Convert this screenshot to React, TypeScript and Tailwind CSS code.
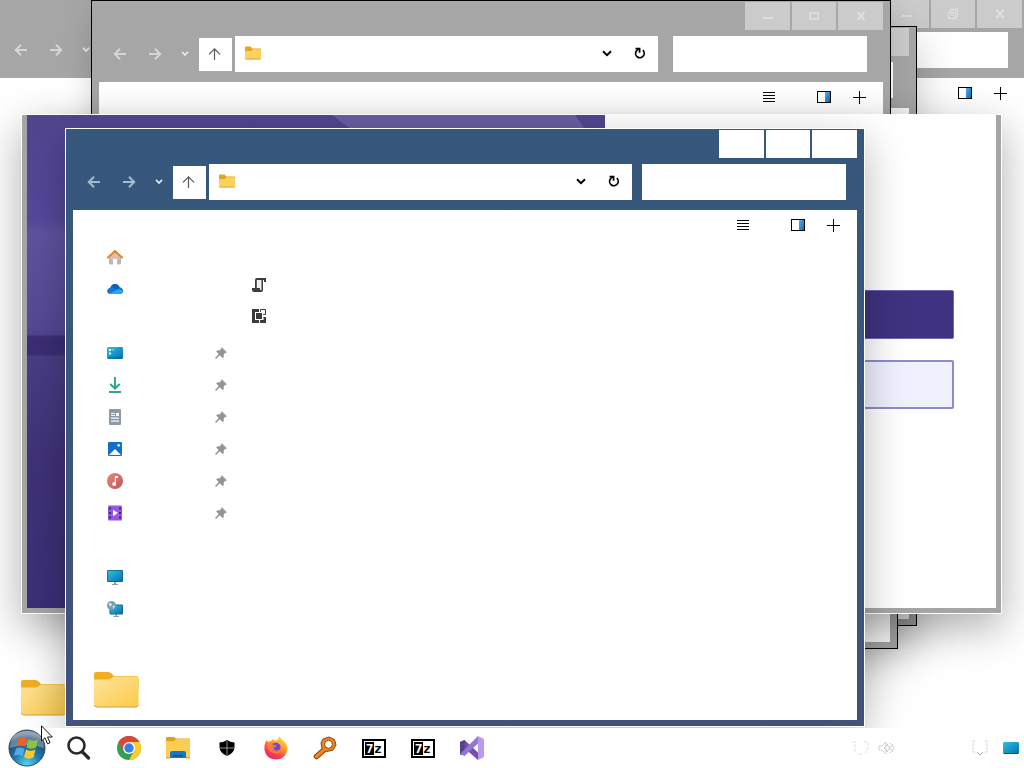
import React from "react";

type IconProps = { className?: string };

const ArrowLeft = ({ className }: IconProps) => (
  <svg width="14" height="14" viewBox="0 0 14 14" className={className} fill="none" stroke="currentColor" strokeWidth="2">
    <path d="M13 7H2M7 1.8L1.8 7L7 12.2" />
  </svg>
);

const ArrowRight = ({ className }: IconProps) => (
  <svg width="14" height="14" viewBox="0 0 14 14" className={className} fill="none" stroke="currentColor" strokeWidth="2">
    <path d="M1 7H12M7 1.8L12.2 7L7 12.2" />
  </svg>
);

const ArrowUp = () => (
  <svg width="15" height="15" viewBox="0 0 15 15" fill="none" stroke="#5a5a5a" strokeWidth="1.2">
    <path d="M6.500 13V1.800M1 7.300L6.500 1.800L12 7.300" />
  </svg>
);

const SmallChevron = ({ className }: IconProps) => (
  <svg width="8" height="6" viewBox="0 0 8 6" className={className} fill="none" stroke="currentColor" strokeWidth="1.7">
    <path d="M1 .8L4 4L7 .8" />
  </svg>
);

const Chevron = () => (
  <svg width="10" height="8" viewBox="0 0 10 8" fill="none" stroke="#000" strokeWidth="2">
    <path d="M1 1.300L5 5.200L9 1.300" />
  </svg>
);

const Refresh = () => (
  <svg width="12" height="14" viewBox="0 0 12 14" fill="none" stroke="#000" strokeWidth="1.7">
    <path d="M8.800 3.200A4.300 4.300 0 1 1 2.200 4.200Q3 2.600 5.300 2" />
    <path d="M1.500 1.700H5.600V5.800" />
  </svg>
);

const Lines = () => (
  <svg width="12" height="12" viewBox="0 0 12 12" shapeRendering="crispEdges" fill="#000">
    <path d="M0 1h12v1H0zM0 4h12v1H0zM0 7h12v1H0zM0 10h12v1H0z" />
  </svg>
);

const PaneIcon = () => (
  <svg width="14" height="12" viewBox="0 0 14 12">
    <defs>
      <linearGradient id="pane" x1="0" y1="0" x2="1" y2="1">
        <stop offset="0" stopColor="#4cb3ee" />
        <stop offset="1" stopColor="#0c6cb8" />
      </linearGradient>
    </defs>
    <rect x="0.5" y="0.5" width="13" height="11" fill="#fff" stroke="#000" />
    <rect x="8" y="1" width="5" height="10" fill="url(#pane)" />
  </svg>
);

const PlusIcon = () => (
  <svg width="13" height="13" viewBox="0 0 13 13" shapeRendering="crispEdges" fill="#000">
    <path d="M6 0h1v13H6zM0 6h13v1H0z" />
  </svg>
);

const SmallFolder = () => (
  <svg width="16" height="16" viewBox="0 0 16 16">
    <path d="M0 1.500Q0 .5 1 .5H5.500L7.500 2.500H15Q16 2.500 16 3.500V7H0Z" fill="#e3a51c" />
    <path d="M0 5H6L8 3.300H15Q16 3.300 16 4.300V12.500Q16 13.500 15 13.500H1Q0 13.500 0 12.500Z" fill="#fbd25f" />
    <path d="M0 12.600H16Q16 13.600 15 13.600H1Q0 13.600 0 12.600Z" fill="#dfa936" />
  </svg>
);

const LargeFolder = () => (
  <svg width="46" height="38" viewBox="0 0 46 38">
    <defs>
      <linearGradient id="folder" x1="0" y1="0" x2="1" y2="1">
        <stop offset="0" stopColor="#fee39a" />
        <stop offset="1" stopColor="#fbcb4a" />
      </linearGradient>
    </defs>
    <path d="M1 4Q1 2 3 2H15Q17 2 18.500 3.500L21 6H43Q45.500 6 45.500 9V20H1Z" fill="#f0af22" />
    <path d="M1 9.500H15Q17 9.500 18.300 8.400L19.500 7.300Q20.500 6.600 22 6.600H43Q45.500 6.600 45.500 9V34.500Q45.500 37 43 37H3.500Q1 37 1 34.500Z" fill="url(#folder)" />
    <path d="M1.300 35Q1.800 37 3.800 37H42.700Q44.800 37 45.200 35" fill="none" stroke="#cfa045" strokeWidth="1" />
  </svg>
);

const HomeIcon = () => (
  <svg width="16" height="16" viewBox="0 0 16 16">
    <path d="M2 7.500L8 2.500L14 7.500V14.500Q14 15.500 13 15.500H10V10H6V15.500H3Q2 15.500 2 14.500Z" fill="#b9b9bb" />
    <path d="M3 8L8 3L13 8V10.500H10V10H6V10.500H3Z" fill="#dcbfae" />
    <path d="M1 8.500L8 2L15 8.500" fill="none" stroke="#e0862f" strokeWidth="2" strokeLinecap="round" strokeLinejoin="round" />
  </svg>
);

const CloudIcon = () => (
  <svg width="16" height="16" viewBox="0 0 16 16">
    <path d="M3.600 13Q0 12.600 .1 9.700Q.5 7 3.200 6.400Q4.800 3 8 3Q11.400 3.200 12.800 6.300Q15.800 7 16 10Q15.700 13 13 13Z" fill="#0f78d4" />
    <path d="M4 5.500Q5.500 3 8 3Q11.400 3.200 12.600 6.300L8.500 8Z" fill="#0d5fb8" />
    <path d="M2.300 12.500L9 9.300Q12 8 14.500 9Q16 9.500 16 10.500Q15.500 13 13 13H4Q3 13 2.300 12.500Z" fill="#29a8ef" />
  </svg>
);

const DesktopIcon = () => (
  <svg width="16" height="16" viewBox="0 0 16 16">
    <defs>
      <linearGradient id="desk" x1="0" y1="0" x2="1" y2="1">
        <stop offset="0" stopColor="#2cc3dc" />
        <stop offset="1" stopColor="#086db4" />
      </linearGradient>
    </defs>
    <rect x="0" y="2" width="16" height="12" rx="1.300" fill="url(#desk)" />
    <path d="M2 4h2v2H2zM2 7.500h2v2H2z" fill="#d9fbff" />
    <path d="M5.500 4h1.500v1.500H5.500z" fill="#7fe0ee" />
    <path d="M1 12.300h14v1H1z" fill="#096593" />
  </svg>
);

const TrayScreenIcon = () => (
  <svg width="16" height="14" viewBox="0 0 16 14">
    <rect x="0" y="1" width="16" height="12" rx="1.300" fill="url(#desk)" />
    <path d="M1 12H15V13H1Z" fill="#0a5780" />
  </svg>
);

const DownloadIcon = () => (
  <svg width="16" height="16" viewBox="0 0 16 16" fill="none" strokeWidth="1.900">
    <path d="M8 0V11.500M3.300 7L8 11.700L12.700 7" stroke="#20a889" />
    <path d="M2 15H14" stroke="#39997f" />
  </svg>
);

const DocumentIcon = () => (
  <svg width="16" height="16" viewBox="0 0 16 16">
    <rect x="2" y="0" width="12" height="16" rx="1" fill="#8b9aa6" />
    <path d="M4 4h4v1H4zM9 4h3v3H9zM4 6h4v1H4zM4 8.500h8v1.200H4zM4 11.500h8v1.200H4z" fill="#f4f8fa" />
  </svg>
);

const PictureIcon = () => (
  <svg width="16" height="16" viewBox="0 0 16 16">
    <rect x="1" y="1" width="14" height="14" rx="1.200" fill="#0f70c5" />
    <path d="M2 14L7.200 8.700Q8 8 8.800 8.700L14 14Z" fill="#f2faff" />
    <circle cx="11.700" cy="4.300" r="1.400" fill="#d7f3ff" />
  </svg>
);

const MusicIcon = () => (
  <svg width="16" height="16" viewBox="0 0 16 16">
    <defs>
      <linearGradient id="music" x1="0" y1="0" x2="1" y2="1">
        <stop offset="0" stopColor="#e9896a" />
        <stop offset="1" stopColor="#bf5366" />
      </linearGradient>
    </defs>
    <circle cx="8" cy="8" r="8" fill="url(#music)" />
    <path d="M8 3H11V5H9V10.500" fill="#fff" />
    <path d="M8.400 3.500V11" stroke="#fff" strokeWidth="1.200" />
    <circle cx="7.200" cy="11" r="1.900" fill="#fff" />
  </svg>
);

const VideoIcon = () => (
  <svg width="16" height="16" viewBox="0 0 16 16">
    <rect x="1" y="0.5" width="14" height="15" rx="1" fill="#9657df" />
    <path d="M2 2.500h2v2H2zM2 7h2v2H2zM2 11.500h2v2H2zM12 2.500h2v2h-2zM12 7h2v2h-2zM12 11.500h2v2h-2z" fill="#4a1d8c" />
    <path d="M6 4.800L11 8L6 11.200Z" fill="#fff" />
  </svg>
);

const Screen = () => (
  <svg width="16" height="16" viewBox="0 0 16 16">
    <path d="M7 12.500h2V15h2v1H5v-1h2z" fill="#879caa" />
    <rect x="0" y="1" width="16" height="12" rx="1" fill="#14617f" />
    <rect x="0.8" y="1.800" width="14.400" height="10.400" rx="0.5" fill="url(#desk)" />
  </svg>
);

const NetworkIcon = () => (
  <svg width="16" height="16" viewBox="0 0 16 16">
    <path d="M8.500 13h1.500v2h2v1H6.500v-1h2z" fill="#879caa" />
    <rect x="2.500" y="3.500" width="13.500" height="10" rx="1" fill="#14617f" />
    <rect x="3.300" y="4.300" width="11.900" height="8.400" fill="url(#desk)" />
    <circle cx="4.500" cy="4.500" r="4.500" fill="#7a9fb6" />
    <path d="M1.500 2.500L4 2L5 4L3 5.500ZM5.500 5L8 4.500L6.500 8Z" fill="#dceaf1" />
  </svg>
);

const PinIcon = () => (
  <svg width="12" height="12" viewBox="0 0 12 12">
    <path d="M6.800 0.500L11.500 5.200L10.200 5.700L8.600 7.300L8.500 10L7.600 10.700L4.900 8L1 11.700L0.300 11L4 7.100L1.500 4.700L2.300 3.600L4.800 3.500L6.300 1.900Z" fill="#8f9695" stroke="#8f9695" strokeWidth="0.5" />
  </svg>
);

const ScrollIcon = () => (
  <svg width="14" height="14" viewBox="0 0 14 14">
    <path d="M3 2Q3 0 5 0H14V4H12V2H11V12Q11 14 9 14H2Q0 14 0 12V10H3Z" fill="#3d3d3d" />
    <path d="M4.800 2H9.500V12H8V10H4.800Z" fill="#efefef" />
  </svg>
);

const BlocksIcon = () => (
  <svg width="14" height="14" viewBox="0 0 14 14">
    <path d="M0 0H7V3H3V11H7V14H0Z" fill="#3b3b3b" />
    <rect x="4" y="4" width="6" height="6" fill="#3b3b3b" />
    <path d="M8.500 2.800V.5H13.500V5.500H11.200" fill="none" stroke="#3b3b3b" />
    <path d="M11.500 8H14V14H8V11H11.500Z" fill="#3b3b3b" />
  </svg>
);

const MinGlyph = () => (
  <svg width="12" height="12" viewBox="0 0 12 12">
    <path d="M1 7h10v2H1z" fill="currentColor" />
  </svg>
);

const MaxGlyph = () => (
  <svg width="12" height="12" viewBox="0 0 12 12" fill="none" stroke="currentColor" strokeWidth="1.800">
    <rect x="2" y="3" width="8" height="6" />
  </svg>
);

const RestoreGlyph = () => (
  <svg width="12" height="12" viewBox="0 0 12 12" fill="none" stroke="currentColor" strokeWidth="1.300">
    <path d="M1.500 4.500h7v6h-7zM3.500 4V1.500h7v7H9M3.500 7h3" />
  </svg>
);

const CloseGlyph = () => (
  <svg width="12" height="12" viewBox="0 0 12 12" fill="none" stroke="currentColor" strokeWidth="2.200">
    <path d="M2.500 2L9.500 10M9.500 2L2.500 10" />
  </svg>
);

type ExplorerProps = {
  name: string;
  frame: string;
  active?: boolean;
  maximized?: boolean;
  className?: string;
  children?: React.ReactNode;
};

function ExplorerWindow({ name, frame, active, maximized, className, children }: ExplorerProps) {
  const caption = active ? "bg-white" : "bg-[#cbcbcb] text-[#dedede]";
  const glyph = active ? "text-[#a2bdd3]" : "text-[#d6d6d6]";
  return (
    <section aria-label={name} className={`absolute flex flex-col ${frame} ${className ?? ""}`}>
      <header>
        <div className={maximized ? "flex justify-end gap-0.5 pr-0.5 pb-1" : "flex justify-end gap-0.5 pt-px pr-[7px] pb-1.5"}>
          <button aria-label="Minimize" className={`flex h-7 w-[45px] items-center justify-center ${caption}`}>
            {!active && <MinGlyph />}
          </button>
          <button aria-label="Maximize" className={`flex h-7 w-11 items-center justify-center ${caption}`}>
            {!active && (maximized ? <RestoreGlyph /> : <MaxGlyph />)}
          </button>
          <button aria-label="Close" className={`flex h-7 w-[45px] items-center justify-center ${caption}`}>
            {!active && <CloseGlyph />}
          </button>
        </div>
        <div className={`flex h-9 items-center gap-[3px] ${glyph} ${maximized ? "pr-4 pl-[5px]" : active ? "pr-[18px] pl-3" : "pr-[23px] pl-3"}`}>
          <button aria-label="Back" className="flex w-8 justify-center"><ArrowLeft /></button>
          <button aria-label="Forward" className="flex w-8 justify-center"><ArrowRight /></button>
          <button aria-label="Recent" className="flex w-[22px] justify-center"><SmallChevron className="text-[#e4e9ee]" /></button>
          <button aria-label="Up" className="flex size-[33px] items-center justify-center bg-white"><ArrowUp /></button>
          <div className="flex h-9 min-w-0 flex-1 items-center bg-white pr-3 pl-2.5">
            <SmallFolder />
            <input aria-label="Address" className="h-full min-w-0 flex-1 bg-transparent outline-none" />
            <button aria-label="History" className="mr-[22px] flex"><Chevron /></button>
            <button aria-label="Refresh" className="flex"><Refresh /></button>
          </div>
          <input
            aria-label="Search"
            type="search"
            className={active ? "ml-[7px] h-9 w-[204px] bg-white outline-none" : "ml-3 h-9 w-[194px] bg-white outline-none"}
          />
        </div>
      </header>
      <div className={`mt-2.5 flex min-h-0 flex-1 flex-col bg-white ${maximized ? "" : "mx-[7px] mb-1.5"}`}>
        <div className="flex h-[30px] shrink-0 items-center justify-end pr-[17px]">
          <button aria-label="View" className="mr-[42px] flex"><Lines /></button>
          <button aria-label="Preview pane" className="mr-[22px] flex"><PaneIcon /></button>
          <button aria-label="New" className="flex"><PlusIcon /></button>
        </div>
        {children}
      </div>
    </section>
  );
}

const places = [
  { name: "Home", icon: <HomeIcon />, pinned: false },
  { name: "Cloud", icon: <CloudIcon />, pinned: false },
  null,
  { name: "Desktop", icon: <DesktopIcon />, pinned: true },
  { name: "Downloads", icon: <DownloadIcon />, pinned: true },
  { name: "Documents", icon: <DocumentIcon />, pinned: true },
  { name: "Pictures", icon: <PictureIcon />, pinned: true },
  { name: "Music", icon: <MusicIcon />, pinned: true },
  { name: "Videos", icon: <VideoIcon />, pinned: true },
  null,
  { name: "Computer", icon: <Screen />, pinned: false },
  { name: "Network", icon: <NetworkIcon />, pinned: false },
];

function ExplorerBody() {
  return (
    <>
      <div className="flex min-h-0 flex-1">
        <nav aria-label="Places" className="w-[170px] overflow-hidden pt-px pr-4 pl-[34px]">
          {places.map((p, i) =>
            p ? (
              <a key={p.name} href="#" aria-label={p.name} className="flex h-8 items-center justify-between">
                {p.icon}
                {p.pinned && <PinIcon />}
              </a>
            ) : (
              <div key={i} className="h-8" />
            )
          )}
        </nav>
        <main className="flex flex-1 flex-col items-start pt-[29px] pl-[9px]">
          <a href="#" aria-label="Script file" className="flex h-[31px] items-center"><ScrollIcon /></a>
          <a href="#" aria-label="Settings file" className="flex h-[31px] items-center"><BlocksIcon /></a>
        </main>
      </div>
      <footer className="px-5 pb-3"><LargeFolder /></footer>
    </>
  );
}

function StartWindow() {
  return (
    <section
      aria-label="Start window"
      className="absolute top-[114px] right-[22px] bottom-[114px] left-[21px] border border-white bg-[#a5a5a5] shadow-[0_14px_40px_0_rgba(0,0,0,0.32)]"
    >
      <div className="flex h-full px-[5px] pb-[5px]">
        <div className="w-3/5 max-w-[578px] shrink-0 overflow-hidden bg-[#3c3072]">
          <svg width="100%" height="100%" viewBox="0 0 578 493" preserveAspectRatio="none">
            <defs>
              <linearGradient id="art" x1="0" y1="0" x2="0" y2="1">
                <stop offset="0" stopColor="#51458f" />
                <stop offset="0.21" stopColor="#54489a" />
                <stop offset="0.24" stopColor="#5f539f" />
                <stop offset="0.43" stopColor="#564995" />
                <stop offset="0.445" stopColor="#51448f" />
                <stop offset="0.45" stopColor="#3b2e75" />
                <stop offset="0.485" stopColor="#3b2e75" />
                <stop offset="0.49" stopColor="#493d85" />
                <stop offset="0.7" stopColor="#3f3278" />
                <stop offset="1" stopColor="#3b2f77" />
              </linearGradient>
            </defs>
            <rect width="578" height="493" fill="url(#art)" />
            <path d="M305 0H548L562 20H332Z" fill="#675da2" />
          </svg>
        </div>
        <div className="flex flex-1 flex-col gap-[21px] bg-white px-[42px] pt-[175px]">
          <button aria-label="Open" className="h-[49px] w-full rounded-[2px] border border-[#7065b5] bg-[#3f3280]" />
          <button aria-label="Continue" className="h-[49px] w-full rounded-[2px] border-2 border-[#9189ca] bg-[#eff1ff]" />
        </div>
      </div>
    </section>
  );
}

const StartOrb = () => (
  <svg width="38" height="38" viewBox="0 0 38 38">
    <defs>
      <radialGradient id="orb" cx="0.5" cy="0.95" r="0.85">
        <stop offset="0" stopColor="#53d6f2" />
        <stop offset="0.45" stopColor="#1c78b0" />
        <stop offset="0.85" stopColor="#23496e" />
        <stop offset="1" stopColor="#5f7d97" />
      </radialGradient>
    </defs>
    <circle cx="19" cy="19" r="18" fill="url(#orb)" stroke="#294a60" />
    <path d="M2 19Q2 2 19 2Q36 2 36 19Q19 13 2 19Z" fill="#fff" opacity="0.3" />
    <path d="M10.500 9.500Q14 7 19 10L17 18Q12.500 15.500 8.500 17.500Z" fill="#e9612b" />
    <path d="M20.500 10.500Q25 13 30 10.500L28 18.500Q23 21 18.500 18.500Z" fill="#8cc63f" />
    <path d="M8 19.500Q12.500 17.500 16.500 20L14.500 27.500Q10 25 6 27Z" fill="#54a8e4" />
    <path d="M18 20.500Q22.500 23 27.500 20.500L25.500 28.500Q20.500 31 16 28Z" fill="#fcc72c" />
  </svg>
);

const SearchIcon = () => (
  <svg width="26" height="26" viewBox="0 0 26 26" fill="none" stroke="#292929">
    <circle cx="9.500" cy="10.500" r="8" strokeWidth="2.600" />
    <path d="M15.500 17L21.500 23" strokeWidth="3.400" strokeLinecap="round" />
  </svg>
);

const ChromeIcon = () => (
  <svg width="24" height="24" viewBox="0 0 24 24">
    <circle cx="12" cy="12" r="12" fill="#34a04e" />
    <path d="M1.600 6A12 12 0 0 1 22.400 6H12L6.800 15Z" fill="#e04335" />
    <path d="M22.400 6A12 12 0 0 1 12 24L17.200 15L12 6Z" fill="#fccb31" />
    <circle cx="12" cy="12" r="6" fill="#fff" />
    <circle cx="12" cy="12" r="4.700" fill="#397fe8" />
  </svg>
);

const ExplorerIcon = () => (
  <svg width="24" height="22" viewBox="0 0 24 22">
    <path d="M0 1Q0 0 1 0H8L10 1.500H23Q24 1.500 24 2.500V10H0Z" fill="#dfa01c" />
    <path d="M0 4H8L10 2H23Q24 2 24 3V21H0Z" fill="#fbce52" />
    <path d="M4 21V16Q4 14 6 14H18Q20 14 20 16V21Z" fill="#1776c8" />
    <path d="M7 18h10v1.500H7z" fill="#0c5193" />
    <path d="M0 20.500h4v1H0zM20 20.500h4v1H20z" fill="#c8963a" />
  </svg>
);

const ShieldIcon = () => (
  <svg width="16" height="16" viewBox="0 0 16 16">
    <path d="M8 0Q11 2.300 15.500 2.500V7Q15.500 13 8 16Q.5 13 .5 7V2.500Q5 2.300 8 0Z" fill="#000" />
    <path d="M8 1V15.500M1 8H15" stroke="#b5b5b5" strokeWidth="0.8" />
  </svg>
);

const FirefoxIcon = () => (
  <svg width="24" height="24" viewBox="0 0 24 24">
    <defs>
      <linearGradient id="fox" x1="0.8" y1="0" x2="0.25" y2="1">
        <stop offset="0" stopColor="#ffe548" />
        <stop offset="0.4" stopColor="#ff9a24" />
        <stop offset="0.75" stopColor="#fb3a55" />
        <stop offset="1" stopColor="#e3287b" />
      </linearGradient>
    </defs>
    <path d="M2.500 4Q3 5.500 4.500 6Q6 5 7.500 5L8 3Q10 4.500 12 4.800Q14.500 3 15.500 0Q17 3.500 20 5.500Q24 9 23.300 14Q21.500 23.500 12 23.500Q2 23 .5 14Q0 8 2.500 4Z" fill="url(#fox)" />
    <circle cx="11.800" cy="11.500" r="4.800" fill="#7546cf" />
    <path d="M3 8Q7 6 10.500 9L13 9.500Q12.500 11 10 11.500Q9.500 14 12.500 14.500Q15.500 14.500 17 12Q17.500 16.500 13 17.500Q7 18 4 13Z" fill="#ff8a35" opacity="0.75" />
  </svg>
);

const ToolIcon = () => (
  <svg width="24" height="24" viewBox="0 0 24 24">
    <path d="M12 13L3.500 20.500" stroke="#84440e" strokeWidth="5.500" strokeLinecap="round" />
    <path d="M10 3L16 1L21.500 3.500L23 9L20 14L14 15.500L9 12L8 7Z" fill="#f28618" stroke="#84440e" />
    <path d="M12 13L3.500 20.500" stroke="#f28618" strokeWidth="3.500" strokeLinecap="round" />
    <circle cx="15.500" cy="8.300" r="4" fill="#fff" stroke="#84440e" />
  </svg>
);

const ArchiveIcon = () => (
  <span className="flex h-[19px] w-6 items-center justify-center border-2 border-black bg-white font-['DejaVu_Sans_Mono','Liberation_Mono',monospace] text-[13px] leading-[13px] font-bold">
    <span className="flex h-[13px] w-[9px] items-center justify-center bg-black text-white">7</span>
    <span className="text-black">z</span>
  </span>
);

const StudioIcon = () => (
  <svg width="24" height="24" viewBox="0 0 24 24">
    <path d="M0 6L4.500 4L18 16.500V24L4.800 12.500V18L0 19Z" fill="#7150ae" />
    <path d="M0 6L4.800 4V19.500L0 18Z" fill="#57418a" />
    <path d="M0 18L18 0V7.500L4.500 20Z" fill="#9576d5" />
    <path d="M18 0L24 3V21L18 24Z" fill="#b99aec" />
  </svg>
);

const apps = [
  { name: "Search", icon: <SearchIcon /> },
  { name: "Browser", icon: <ChromeIcon /> },
  { name: "Files", icon: <ExplorerIcon /> },
  { name: "Security", icon: <ShieldIcon /> },
  { name: "Firefox", icon: <FirefoxIcon /> },
  { name: "Finder", icon: <ToolIcon /> },
  { name: "Archive one", icon: <ArchiveIcon /> },
  { name: "Archive two", icon: <ArchiveIcon /> },
  { name: "Studio", icon: <StudioIcon /> },
];

function Taskbar() {
  return (
    <footer className="flex h-10 shrink-0 items-center bg-white">
      <button aria-label="Start" className="flex w-[55px] pl-2"><StartOrb /></button>
      {apps.map((a) => (
        <button key={a.name} aria-label={a.name} className="flex h-10 w-[49px] items-center justify-center">
          {a.icon}
        </button>
      ))}
      <div className="ml-auto flex items-center pr-[5px]">
        <button aria-label="Battery" className="mr-2 flex">
          <svg width="18" height="16" viewBox="0 0 18 16" fill="none" stroke="#dedede" strokeDasharray="3 1.500">
            <path d="M1 2H3V14M7 14H11M12 2H16V7L14 13" />
          </svg>
        </button>
        <button aria-label="Volume" className="mr-[76px] flex">
          <svg width="17" height="16" viewBox="0 0 17 16" fill="none" stroke="#c4c4c4" strokeDasharray="2 0.800">
            <path d="M1 6H4L8 2V14L4 10H1ZM9 5L12 8L9 11L6 8ZM12 3L16 8L12 13M9 4L15 12M15 4L9 12" />
          </svg>
        </button>
        <button aria-label="Notifications" className="mr-3.5 flex">
          <svg width="18" height="16" viewBox="0 0 18 16" fill="none" stroke="#d2d2d2">
            <path d="M4 1H2V12H5M14 1H16V12H13" strokeDasharray="3 1" />
            <path d="M6 12L9 15L12 12" stroke="#aaa" />
          </svg>
        </button>
        <button aria-label="Show desktop" className="flex"><TrayScreenIcon /></button>
      </div>
    </footer>
  );
}

export default function App() {
  return (
    <div className="relative flex h-screen flex-col overflow-hidden bg-white font-['Liberation_Sans',sans-serif]">
      <div className="relative min-h-0 flex-1 overflow-hidden">
        <ExplorerWindow name="Background folder" maximized frame="inset-0 bg-[#a6a6a6]">
          <div className="flex flex-1 items-end px-5 pb-3"><LargeFolder /></div>
        </ExplorerWindow>
        <ExplorerWindow
          name="Third folder"
          frame="top-[26px] right-[107px] bottom-[102px] left-[117px] border border-black bg-[#a6a6a6]"
          className="shadow-[0_16px_40px_rgba(0,0,0,0.22)]"
        />
        <ExplorerWindow
          name="Fourth folder"
          frame="top-[130px] right-[126px] bottom-[79px] left-[98px] border border-black bg-[#a6a6a6]"
          className="shadow-[0_10px_50px_rgba(0,0,0,0.28)]"
        />
        <ExplorerWindow
          name="Second folder"
          frame="top-0 right-[133px] bottom-[128px] left-[91px] border border-black bg-[#a6a6a6]"
          className="shadow-[0_8px_30px_rgba(0,0,0,0.12)]"
        />
        <StartWindow />
        <ExplorerWindow
          name="Active folder"
          active
          frame="top-[128px] right-[159px] bottom-px left-[65px] border border-white bg-linear-to-b from-[#35587c] to-[#42527a]"
          className="shadow-[0_14px_40px_rgba(0,0,0,0.28)]"
        >
          <ExplorerBody />
        </ExplorerWindow>
      </div>
      <Taskbar />
      <svg width="12" height="20" viewBox="0 0 12 20" className="pointer-events-none absolute bottom-[23px] left-[41px]">
        <path d="M.5 .8V16L4 12.800L6.500 18.800L9 17.700L6.500 12H11.300Z" fill="#fff" stroke="#111" />
      </svg>
    </div>
  );
}
